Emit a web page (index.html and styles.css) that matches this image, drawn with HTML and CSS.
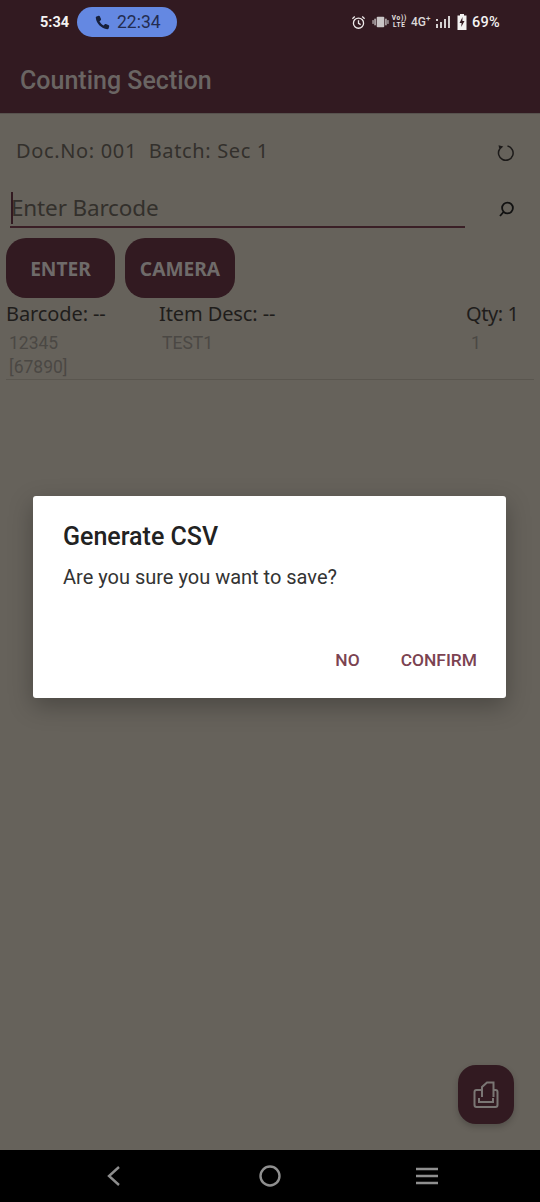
FILE: index.html
```html
<!DOCTYPE html>
<html lang="en">
<head>
<meta charset="utf-8">
<title>Counting Section</title>
<link rel="stylesheet" href="styles.css">
</head>
<body>
<div class="app">
  <header class="header">
    <div class="status">
      <span class="clock">5:34</span>
      <span class="pill">
        <svg class="pill-icon" viewBox="0 0 24 24"><path d="M6.6 2.5 3.6 3.4C2.8 3.7 2.4 4.4 2.5 5.3 3.4 13.5 10.500 20.600 18.700 21.500 19.600 21.600 20.300 21.200 20.600 20.400L21.500 17.400C21.700 16.700 21.400 16.100 20.800 15.800L16.800 14.100C16.200 13.900 15.600 14 15.200 14.500L13.700 16.300C11 15 9 13 7.700 10.300L9.500 8.800C10 8.400 10.100 7.800 9.900 7.200L8.200 3.200C7.900 2.600 7.300 2.300 6.600 2.500Z"/></svg>
        <span>22:34</span>
      </span>
      <span class="status-right">
        <svg class="ic-alarm" viewBox="0 0 16 16"><circle cx="8" cy="8.700" r="5.400"/><path d="M8 5.500V9L10.300 10.300M1.500 4 4 1.700M14.500 4 12 1.700"/></svg>
        <svg class="ic-vib" viewBox="0 0 18 12"><rect x="5" y="0.500" width="8" height="11" rx="1"/><rect x="2.500" y="2.500" width="1.500" height="7"/><rect x="14" y="2.500" width="1.500" height="7"/><rect x="0.500" y="4" width="1.200" height="4"/><rect x="16.300" y="4" width="1.200" height="4"/></svg>
        <span class="volte"><span>Vo))</span><span>LTE</span></span>
        <span class="net">4G<sup>+</sup></span>
        <svg class="ic-signal" viewBox="0 0 15 14"><rect x="0" y="9" width="2" height="4"/><rect x="0" y="4" width="2" height="2"/><rect x="4" y="7" width="2" height="6"/><rect x="8" y="4" width="2" height="9"/><rect x="12" y="1" width="2" height="12"/></svg>
        <svg class="ic-batt" viewBox="0 0 10 16"><path d="M3 0H7V1.500H9.500V16H0.500V1.500H3Z"/><path class="bolt" d="M5.500 3 2.500 9H4.600L4.200 13 7.500 7H5.400Z"/></svg>
        <span class="pct">69%</span>
      </span>
    </div>
    <div class="toolbar">Counting Section</div>
  </header>

  <main class="content">
    <div class="doc-row">
      <span class="doc-text">Doc.No: 001&nbsp; Batch: Sec 1</span>
      <svg class="ic-refresh" viewBox="0 0 20 20"><path d="M11.500 2.900A7.300 7.300 0 1 1 3.700 6"/><path class="fill" d="M2.500 2.200 7.300 3.400 3.600 7Z"/></svg>
    </div>
    <div class="search-row">
      <div class="field"><span class="caret"></span><span class="placeholder">Enter Barcode</span></div>
      <svg class="ic-search" viewBox="0 0 18 18"><circle cx="10.500" cy="8" r="5.400"/><path d="M6.500 12 3 16"/></svg>
    </div>
    <div class="actions">
      <button class="btn btn-enter">ENTER</button>
      <button class="btn btn-camera">CAMERA</button>
    </div>
    <div class="grid labels">
      <span>Barcode: --</span>
      <span>Item Desc: --</span>
      <span class="label-qty">Qty: 1</span>
    </div>
    <div class="grid item">
      <span>12345<br>[67890]</span>
      <span>TEST1</span>
      <span>1</span>
    </div>
  </main>

  <nav class="nav">
    <svg class="nav-back" viewBox="0 0 16 24"><path d="M13 3 3 12 13 21"/></svg>
    <svg class="nav-home" viewBox="0 0 24 24"><circle cx="12" cy="12" r="9.500"/></svg>
    <svg class="nav-menu" viewBox="0 0 24 18"><path d="M1 2H23M1 9H23M1 16H23"/></svg>
  </nav>

  <button class="fab" aria-label="Export">
    <svg viewBox="0 0 28 28"><path d="M10 9H4.500Q2.500 9 2.500 11V24Q2.500 26 4.500 26H23.500Q25.500 26 25.500 24V11Q25.500 9 23.500 9H22"/><path d="M10 16V6L15 1.500H21.500V16"/><path d="M7 17V21H21V17"/></svg>
  </button>

  <section class="dialog">
    <h2 class="dialog-title">Generate CSV</h2>
    <p class="dialog-body">Are you sure you want to save?</p>
    <div class="dialog-actions">
      <span>NO</span>
      <span>CONFIRM</span>
    </div>
  </section>
</div>
</body>
</html>
```

FILE: styles.css
```css
* { box-sizing: border-box; }
html, body { margin: 0; padding: 0; }
body { font-family: Roboto, sans-serif; background: #66625b; }
.app { position: relative; width: 540px; height: 1202px; display: flex; flex-direction: column; overflow: hidden; }

.header { height: 114px; background: #321a21; border-bottom: 1px solid #57524e; flex: none; }
.status { height: 44px; display: flex; align-items: center; padding: 0 40px 0 40px; color: #f4f2f2; }
.clock { font-size: 14.500px; font-weight: 700; width: 37px; }
.pill { width: 100px; height: 30px; border-radius: 15px; background: #6488e2; color: #232c50; display: flex; align-items: center; gap: 6px; padding-left: 17px; font-size: 17.500px; }
.pill-icon { width: 17px; height: 17px; fill: #17203c; }
.status-right { margin-left: auto; display: flex; align-items: center; }
.ic-alarm { width: 15px; height: 15px; fill: none; stroke: #eeeaea; stroke-width: 1.400; margin-right: 6px; }
.ic-vib { width: 17px; height: 12px; fill: #c9c5c6; margin-right: 3px; }
.volte { display: flex; flex-direction: column; font-size: 6.500px; font-weight: 700; line-height: 7px; letter-spacing: 0.700px; margin-right: 4px; text-align: center; color: #e8e4e4; }
.net { font-size: 12px; font-weight: 500; color: #dcd8d8; margin-right: 5px; width: 20px; white-space: nowrap; }
.net sup { font-size: 8px; line-height: 0; }
.ic-signal { width: 15px; height: 14px; fill: #d4d0d0; margin-right: 6px; }
.ic-batt { width: 10px; height: 16px; fill: #f4f2f2; margin-right: 5px; }
.ic-batt .bolt { fill: #321a21; }
.pct { font-size: 14.500px; font-weight: 500; letter-spacing: 0.300px; }

.toolbar { height: 69px; padding: 20px 0 0 20px; font-size: 25px; line-height: 34px; font-weight: 500; color: #6a6563; }

.content { flex: 1; font-family: "Noto Sans", sans-serif; }
.doc-row { height: 58px; display: flex; align-items: center; padding: 15px 24px 0 16px; justify-content: space-between; }
.doc-text { font-size: 20px; color: #33302c; white-space: nowrap; letter-spacing: 0.650px; }
.ic-refresh { width: 20px; height: 20px; fill: none; stroke: #1c1a19; stroke-width: 1.500; margin-top: 5px; }
.ic-refresh .fill { fill: #1c1a19; stroke: none; }

.search-row { display: flex; align-items: flex-start; padding: 20px 25px 0 10px; justify-content: space-between; }
.field { position: relative; width: 455px; height: 36px; border-bottom: 2px solid #3a1f26; padding-left: 1px; }
.caret { position: absolute; left: 1px; top: 0; width: 2px; height: 32px; background: #321a21; }
.placeholder { font-size: 22.500px; line-height: 32px; color: #33302c; letter-spacing: -0.150px; }
.ic-search { width: 18px; height: 18px; margin-top: 8px; fill: none; stroke: #111; stroke-width: 1.800; }

.actions { display: flex; gap: 10px; padding: 10px 0 0 6px; }
.btn { height: 60px; border: 0; border-radius: 20px; background: #321a21; color: #6f6b6a; font-family: "Noto Sans", sans-serif; font-weight: 700; font-size: 19.200px; padding: 0; }
.btn-enter { width: 109px; }
.btn-camera { width: 110px; }

.grid { display: grid; grid-template-columns: 153px 307px 1fr; }
.labels { padding: 4px 0 0 6px; font-size: 20px; line-height: 24px; color: #1f1d1b; height: 32px; letter-spacing: -0.100px; }
.label-qty { letter-spacing: -0.400px; }
.item { margin: 0 6px; padding: 1px 0 0 3px; border-bottom: 1px solid #5a564f; height: 50px; grid-template-columns: 153px 309px 1fr; font-family: Roboto, sans-serif; font-size: 17.500px; line-height: 24px; color: #4b4844; }

.nav { height: 52px; flex: none; background: #000; display: flex; align-items: center; padding-left: 106px; }
.nav-back { width: 16px; height: 24px; fill: none; stroke: #8d8d8d; stroke-width: 2.400; margin-right: 136px; }
.nav-home { width: 24px; height: 24px; fill: none; stroke: #8f8f8f; stroke-width: 2.400; margin-right: 133px; }
.nav-menu { width: 24px; height: 18px; fill: none; stroke: #8f8f8f; stroke-width: 2.600; }

.fab { position: absolute; left: 458px; top: 1065px; width: 56px; height: 59px; border: 0; border-radius: 18px; background: #321a21; box-shadow: 0 3px 6px rgba(0,0,0,0.2); padding: 14px; }
.fab svg { width: 28px; height: 28px; fill: none; stroke: #7a7674; stroke-width: 2; display: block; }

.dialog { position: absolute; left: 33px; top: 496px; width: 473px; height: 202px; background: #fff; border-radius: 3px; box-shadow: 0 8px 24px rgba(0,0,0,0.28); padding: 25px 29px 0 30px; display: flex; flex-direction: column; }
.dialog-title { margin: 0; font-size: 25px; line-height: 32px; font-weight: 500; color: #222; }
.dialog-body { margin: 12px 0 0; font-size: 20px; line-height: 24px; color: #333; }
.dialog-actions { margin-top: auto; padding-bottom: 27px; display: flex; justify-content: flex-end; gap: 41px; font-size: 17.400px; line-height: 22px; font-weight: 500; color: #7b4351; }
```
